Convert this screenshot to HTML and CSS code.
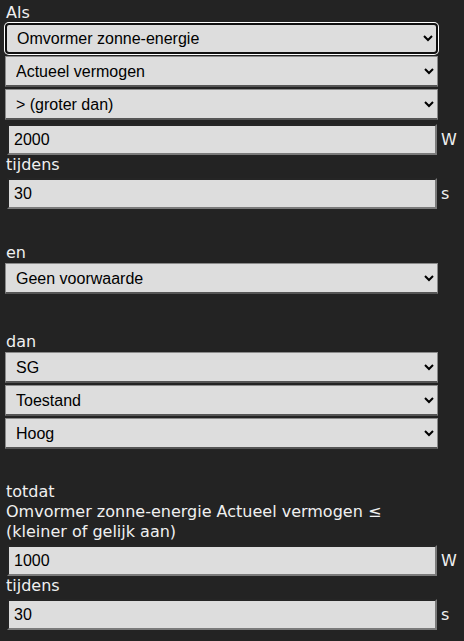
FILE: index.html
```html
<!DOCTYPE html>
<html lang="nl">
<head>
<meta charset="utf-8">
<link rel="stylesheet" href="styles.css">
</head>
<body>
<div class="form">
  <div class="label">Als</div>
  <select class="sel focused"><option>Omvormer zonne-energie</option></select>
  <select class="sel"><option>Actueel vermogen</option></select>
  <select class="sel"><option>&gt; (groter dan)</option></select>
  <div class="row"><input class="num" type="text" value="2000"><span class="unit">W</span></div>
  <div class="label">tijdens</div>
  <div class="row"><input class="num" type="text" value="30"><span class="unit">s</span></div>

  <div class="label section">en</div>
  <select class="sel"><option>Geen voorwaarde</option></select>

  <div class="label section section-dan">dan</div>
  <select class="sel"><option>SG</option></select>
  <select class="sel"><option>Toestand</option></select>
  <select class="sel"><option>Hoog</option></select>

  <div class="label section section-totdat">totdat</div>
  <div class="label">Omvormer zonne-energie Actueel vermogen ≤<br>(kleiner of gelijk aan)</div>
  <div class="row"><input class="num" type="text" value="1000"><span class="unit">W</span></div>
  <div class="label">tijdens</div>
  <div class="row"><input class="num" type="text" value="30"><span class="unit">s</span></div>
</div>
</body>
</html>
```

FILE: styles.css
```css
html, body {
  margin: 0;
  background: #232323;
}
body {
  color: #f0f0f0;
  font-family: "DejaVu Sans", Verdana, sans-serif;
  font-size: 16px;
}
.form {
  display: flex;
  flex-direction: column;
  align-items: flex-start;
  padding: 3px 5px 0 5px;
}
.label {
  line-height: 20px;
  margin-left: 1px;
}
.section {
  margin-top: 34px;
}
.section-dan {
  margin-top: 36px;
}
.section-totdat {
  margin-top: 31px;
}
.sel {
  display: block;
  width: 433px;
  height: 31px;
  margin: 0 0 2px 0;
  padding: 0 6px;
  background-color: #dddddd;
  color: #000;
  border: 1px solid #8a8a8a;
  border-bottom: 2px solid #555;
  border-radius: 0;
  font-family: "Liberation Sans", Arial, sans-serif;
  font-size: 16px;
}
.sel.focused {
  border: 2px solid #101010;
  border-radius: 4px;
  box-shadow: 0 0 0 1px #ffffff;
}
.row {
  display: flex;
  align-items: center;
  gap: 4px;
  margin-left: 2px;
  margin-top: 2px;
}
.label + .row {
  margin-top: 3px;
}
.num {
  width: 430px;
  height: 31px;
  box-sizing: border-box;
  margin: 0;
  padding: 0 5px;
  background: #dddddd;
  color: #000;
  border: 2px inset #7a7a7a;
  font-family: "Liberation Sans", Arial, sans-serif;
  font-size: 16px;
}
.unit {
  font-size: 16px;
  line-height: 20px;
}
```
